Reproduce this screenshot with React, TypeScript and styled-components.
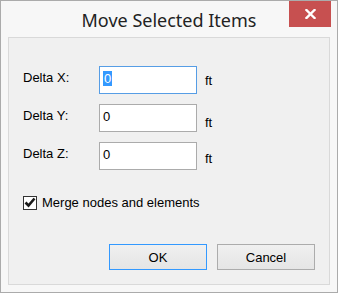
import * as React from "react";
import styled, { createGlobalStyle } from "styled-components";

const GlobalStyle = createGlobalStyle`
  html, body {
    margin: 0;
    padding: 0;
    background: #ffffff;
  }
  * {
    box-sizing: border-box;
  }
`;

const Window = styled.div`
  position: relative;
  width: 338px;
  height: 293px;
  border: 1px solid #ababab;
  background: #f7f7f7;
  display: flex;
  flex-direction: column;
  padding: 0 7px 7px;
  font-family: "Liberation Sans", Arial, sans-serif;
  font-size: 13px;
  color: #000000;
`;

const TitleBar = styled.div`
  height: 36px;
  flex: none;
  display: flex;
  align-items: center;
  justify-content: center;
`;

const Title = styled.div`
  font-family: "Noto Sans", "Open Sans", sans-serif;
  font-size: 18px;
  color: #222222;
  padding-top: 1px;
`;

const CloseButton = styled.div`
  position: absolute;
  top: 0;
  right: 6px;
  width: 42px;
  height: 26px;
  background: #c75050;
  display: flex;
  align-items: center;
  justify-content: center;
`;

const Panel = styled.div`
  flex: 1;
  border: 1px solid #d9d9d9;
  background: #f0f0f0;
  padding: 28px 14px 14px 14px;
  display: flex;
  flex-direction: column;
`;

const Fields = styled.div`
  display: grid;
  grid-template-columns: 68px 98px auto;
  column-gap: 8px;
  row-gap: 10px;
`;

const Label = styled.div`
  line-height: 15px;
  margin-top: 4px;
  align-self: start;
`;

const Field = styled.div<{ $focused?: boolean }>`
  height: 28px;
  border: 1px solid ${({ $focused }) => ($focused ? "#569de5" : "#ababab")};
  background: #ffffff;
  padding: 4px 3px 0;
  line-height: 15px;
`;

const Selected = styled.span`
  background: #3399ff;
  color: #ffffff;
  padding: 0 1px;
`;

const Unit = styled.div<{ $drop: number }>`
  line-height: 15px;
  align-self: start;
  margin-top: ${({ $drop }) => $drop}px;
`;

const CheckRow = styled.label`
  display: flex;
  align-items: center;
  gap: 5px;
  margin-top: 25px;
  line-height: 15px;
`;

const CheckBox = styled.span`
  width: 14px;
  height: 14px;
  border: 1px solid #333333;
  background: #ffffff;
  display: flex;
  align-items: center;
  justify-content: center;
`;

const Buttons = styled.div`
  margin-top: auto;
  display: flex;
  justify-content: flex-end;
  gap: 10px;
`;

const Button = styled.div<{ $default?: boolean }>`
  width: 98px;
  height: 26px;
  border: 1px solid ${({ $default }) => ($default ? "#3399ff" : "#acacac")};
  background: linear-gradient(#f0f0f0, #e5e5e5);
  display: flex;
  align-items: center;
  justify-content: center;
  line-height: 15px;
`;

const rows = [
  { label: "Delta X:", value: "0", focused: true, drop: 7 },
  { label: "Delta Y:", value: "0", focused: false, drop: 11 },
  { label: "Delta Z:", value: "0", focused: false, drop: 9 },
];

export default function App() {
  return (
    <>
      <GlobalStyle />
      <Window>
        <TitleBar>
          <Title>Move Selected Items</Title>
          <CloseButton>
            <svg width="11" height="10" viewBox="0 0 11 10">
              <path
                d="M1.5 1 L9.5 9 M9.5 1 L1.5 9"
                stroke="#ffffff"
                strokeWidth="2.4"
                strokeLinecap="square"
              />
            </svg>
          </CloseButton>
        </TitleBar>
        <Panel>
          <Fields>
            {rows.map((row) => (
              <React.Fragment key={row.label}>
                <Label>{row.label}</Label>
                <Field $focused={row.focused}>
                  {row.focused ? <Selected>{row.value}</Selected> : row.value}
                </Field>
                <Unit $drop={row.drop}>ft</Unit>
              </React.Fragment>
            ))}
          </Fields>
          <CheckRow>
            <CheckBox>
              <svg width="12" height="11" viewBox="0 0 12 11">
                <path
                  d="M1.5 5.5 L4.5 8.5 L10.5 1.5"
                  stroke="#1a1a1a"
                  strokeWidth="2.6"
                  fill="none"
                />
              </svg>
            </CheckBox>
            Merge nodes and elements
          </CheckRow>
          <Buttons>
            <Button $default>OK</Button>
            <Button>Cancel</Button>
          </Buttons>
        </Panel>
      </Window>
    </>
  );
}
